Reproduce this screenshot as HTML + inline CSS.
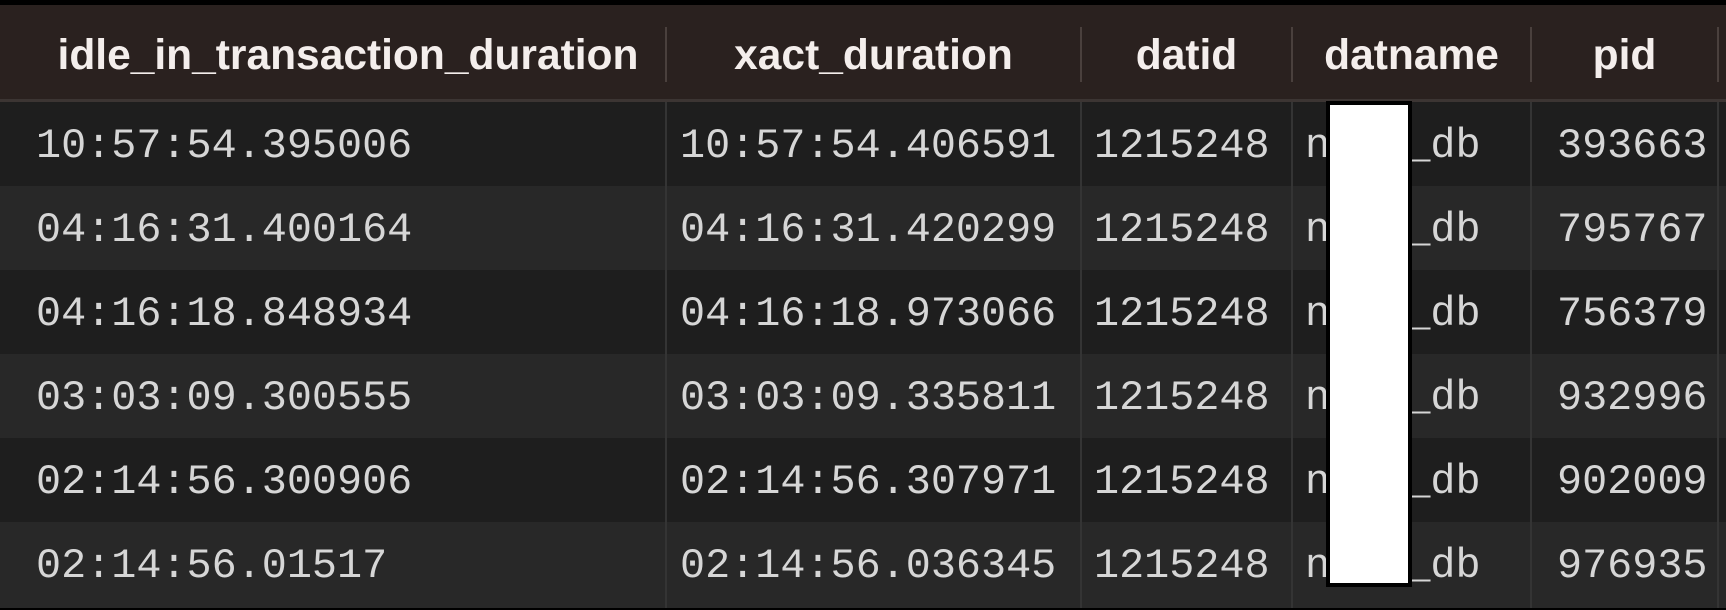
<!DOCTYPE html>
<html><head><style>
body{margin:0;width:1726px;height:608px;background:#000;overflow:hidden;position:relative;font-family:"Liberation Sans",sans-serif}
.hdr{position:absolute;left:0;top:5px;width:1726px;height:94px;background:#2a211f}
.hb{position:absolute;left:0;top:99px;width:1726px;height:3px;background:#3c3533}
.hs{position:absolute;top:27px;height:55px;width:2px;background:#4a403d}
.ht{position:absolute;top:5px;height:94px;line-height:102px;text-align:center;color:#f4eeec;font-weight:bold;font-size:42.5px;white-space:nowrap}
.row{position:absolute;left:0;width:1726px;height:84px}
.bs{position:absolute;top:102px;height:506px;width:2px;background:#343434}
.c{position:absolute;height:84px;line-height:88px;font-family:"Liberation Mono",monospace;font-size:41.8px;color:#d6d6d6;white-space:nowrap}
</style></head><body>
<div class="hdr"></div><div class="hb"></div>
<div class="ht" style="left:22px;width:652px">idle_in_transaction_duration</div>
<div class="ht" style="left:666px;width:415px">xact_duration</div>
<div class="ht" style="left:1081px;width:211px">datid</div>
<div class="ht" style="left:1292px;width:239px">datname</div>
<div class="ht" style="left:1531px;width:187px">pid</div>
<div class="hs" style="left:665px"></div><div class="hs" style="left:1080px"></div><div class="hs" style="left:1291px"></div><div class="hs" style="left:1530px"></div><div class="hs" style="left:1717px"></div>
<div class="row" style="top:102px;background:#1e1e1e"></div>
<div class="row" style="top:186px;background:#282828"></div>
<div class="row" style="top:270px;background:#1e1e1e"></div>
<div class="row" style="top:354px;background:#282828"></div>
<div class="row" style="top:438px;background:#1e1e1e"></div>
<div class="row" style="top:522px;background:#282828;height:86px"></div>
<div class="bs" style="left:665px"></div><div class="bs" style="left:1080px"></div><div class="bs" style="left:1291px"></div><div class="bs" style="left:1530px"></div><div class="bs" style="left:1717px"></div>

<div class="c" style="top:102px;left:36px">10:57:54.395006</div>
<div class="c" style="top:186px;left:36px">04:16:31.400164</div>
<div class="c" style="top:270px;left:36px">04:16:18.848934</div>
<div class="c" style="top:354px;left:36px">03:03:09.300555</div>
<div class="c" style="top:438px;left:36px">02:14:56.300906</div>
<div class="c" style="top:522px;left:36px">02:14:56.01517</div>

<div class="c" style="top:102px;left:680px">10:57:54.406591</div>
<div class="c" style="top:186px;left:680px">04:16:31.420299</div>
<div class="c" style="top:270px;left:680px">04:16:18.973066</div>
<div class="c" style="top:354px;left:680px">03:03:09.335811</div>
<div class="c" style="top:438px;left:680px">02:14:56.307971</div>
<div class="c" style="top:522px;left:680px">02:14:56.036345</div>

<div class="c" style="top:102px;left:1094px">1215248</div>
<div class="c" style="top:186px;left:1094px">1215248</div>
<div class="c" style="top:270px;left:1094px">1215248</div>
<div class="c" style="top:354px;left:1094px">1215248</div>
<div class="c" style="top:438px;left:1094px">1215248</div>
<div class="c" style="top:522px;left:1094px">1215248</div>

<div class="c" style="top:102px;left:1305px">nxxx_db</div>
<div class="c" style="top:186px;left:1305px">nxxx_db</div>
<div class="c" style="top:270px;left:1305px">nxxx_db</div>
<div class="c" style="top:354px;left:1305px">nxxx_db</div>
<div class="c" style="top:438px;left:1305px">nxxx_db</div>
<div class="c" style="top:522px;left:1305px">nxxx_db</div>

<div class="c" style="top:102px;left:1557px">393663</div>
<div class="c" style="top:186px;left:1557px">795767</div>
<div class="c" style="top:270px;left:1557px">756379</div>
<div class="c" style="top:354px;left:1557px">932996</div>
<div class="c" style="top:438px;left:1557px">902009</div>
<div class="c" style="top:522px;left:1557px">976935</div>

<div style="position:absolute;left:1326px;top:101px;width:78px;height:478px;background:#fff;border:4px solid #000"></div>
</body></html>
